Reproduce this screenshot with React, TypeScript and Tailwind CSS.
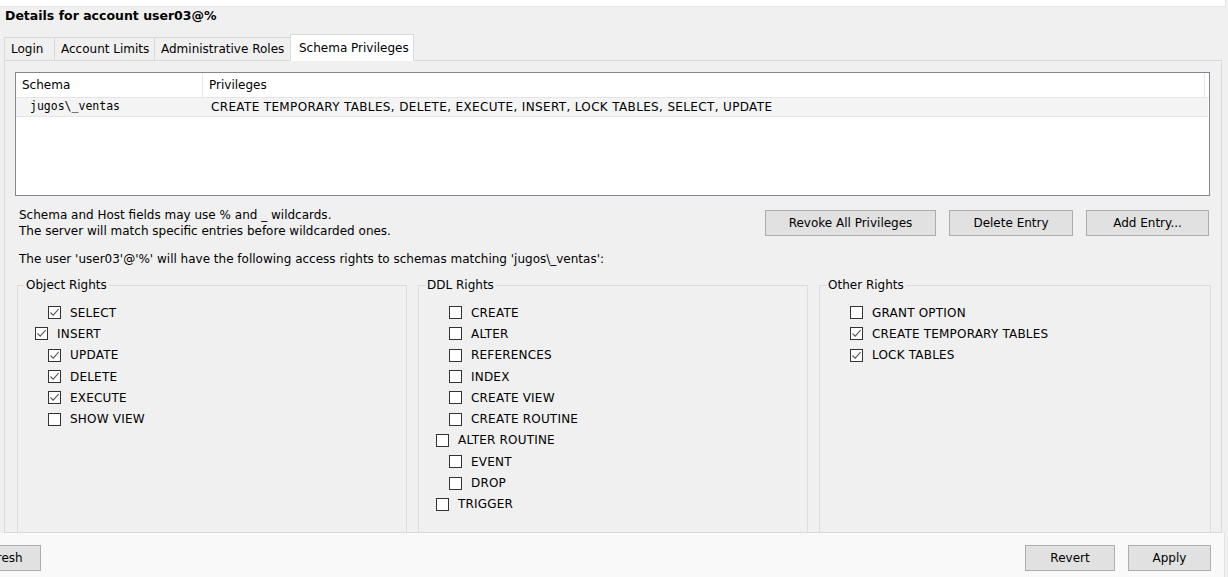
import React from "react";

const tabs = [
  { label: "Login", w: "w-[50px]" },
  { label: "Account Limits", w: "w-[100px]" },
  { label: "Administrative Roles", w: "w-[136px]" },
  { label: "Schema Privileges", w: "w-[124px]" },
];

const objectRights: [string, boolean, boolean][] = [
  ["SELECT", true, false],
  ["INSERT", true, true],
  ["UPDATE", true, false],
  ["DELETE", true, false],
  ["EXECUTE", true, false],
  ["SHOW VIEW", false, false],
];

const ddlRights: [string, boolean, boolean][] = [
  ["CREATE", false, false],
  ["ALTER", false, false],
  ["REFERENCES", false, false],
  ["INDEX", false, false],
  ["CREATE VIEW", false, false],
  ["CREATE ROUTINE", false, false],
  ["ALTER ROUTINE", false, true],
  ["EVENT", false, false],
  ["DROP", false, false],
  ["TRIGGER", false, true],
];

const otherRights: [string, boolean, boolean][] = [
  ["GRANT OPTION", false, false],
  ["CREATE TEMPORARY TABLES", true, false],
  ["LOCK TABLES", true, false],
];

function Check({ on }: { on: boolean }) {
  return (
    <span className="w-[13px] h-[13px] border border-[#333] bg-white flex items-center justify-center shrink-0">
      {on && (
        <svg viewBox="0 0 11 11" className="w-[11px] h-[11px]">
          <path d="M1.5 5.5 L4.2 8.2 L9.6 2.2" fill="none" stroke="#555" strokeWidth="1.1" />
        </svg>
      )}
    </span>
  );
}

function Group({ title, rows, width }: { title: string; rows: [string, boolean, boolean][]; width: string }) {
  return (
    <fieldset className={`border border-[#dcdcdc] h-[300px] shrink-0 ${width}`}>
      <legend className="ml-[6px] px-[2px] leading-[16px]">{title}</legend>
      <div className="pt-[9px]">
        {rows.map(([label, on, outdent]) => (
          <div key={label} className={`flex items-center h-[21.3px] gap-[9px] ${outdent ? "pl-[17px]" : "pl-[30px]"}`}>
            <Check on={on} />
            <span className="leading-[14px] tracking-[0.2px]">{label}</span>
          </div>
        ))}
      </div>
    </fieldset>
  );
}

function Button({ label, width }: { label: string; width: string }) {
  return (
    <div className={`h-[26px] ${width} bg-[#e1e1e1] border border-[#adadad] flex items-center justify-center shrink-0`}>
      {label}
    </div>
  );
}

export default function App() {
  return (
    <div className="w-[1228px] h-[577px] overflow-hidden bg-[#f0f0f0] text-[12px] text-black font-['DejaVu_Sans',sans-serif] flex flex-col">
      <div className="h-[7px] w-[1226px] bg-white border-r border-b border-[#e3e3e3] shrink-0" />

      {/* Title */}
      <div className="h-[22px] pl-[5px] pt-[1px] font-bold text-[12.5px] leading-[16px] shrink-0">Details for account user03@%</div>

      {/* Tabs */}
      <div className="flex items-end h-[31px] pl-[4px] shrink-0">
        {tabs.map((t, i) => {
          const active = i === tabs.length - 1;
          return (
            <div
              key={t.label}
              className={`flex items-center border border-[#d9d9d9] whitespace-nowrap ${t.w} ${
                active ? "h-[27px] bg-white border-b-white -mb-px relative z-10 pl-[8px]" : "h-[23px] bg-[#f0f0f0] border-b-0 border-r-0 pl-[6px]"
              }`}
            >
              {t.label}
            </div>
          );
        })}
      </div>

      {/* Tab pane */}
      <div className="ml-[4px] w-[1218px] h-[473px] border border-[#d9d9d9] bg-[#f0f0f0] pl-[10px] pt-[11px] overflow-hidden shrink-0">
        {/* Schema table */}
        <div className="w-[1195px] h-[124px] bg-white border border-[#828790]">
          <div className="flex h-[25px] items-center border-b border-[#e5e5e5]">
            <div className="w-[187px] pl-[6px] h-full flex items-center border-r border-[#e5e5e5]">Schema</div>
            <div className="flex-1 pl-[6px] h-full flex items-center border-r border-[#e5e5e5] mr-[4px]">Privileges</div>
          </div>
          <div className="flex h-[19px] items-center bg-[#f4f4f4] border-b border-[#e5e5e5] mr-[1px]">
            <div className="w-[187px] pl-[14px] font-['DejaVu_Sans_Mono',monospace] text-[11.5px]">jugos\_ventas</div>
            <div className="flex-1 pl-[8px] whitespace-nowrap tracking-[0.35px]">CREATE TEMPORARY TABLES, DELETE, EXECUTE, INSERT, LOCK TABLES, SELECT, UPDATE</div>
          </div>
        </div>

        {/* Info + actions */}
        <div className="flex justify-between items-start mt-[11px] w-[1194px]">
          <div className="pl-[4px] leading-[16px]">
            <div>Schema and Host fields may use % and _ wildcards.</div>
            <div>The server will match specific entries before wildcarded ones.</div>
          </div>
          <div className="flex gap-[13px] mt-[3px]">
            <Button label="Revoke All Privileges" width="w-[171px]" />
            <Button label="Delete Entry" width="w-[124px]" />
            <Button label="Add Entry..." width="w-[123px]" />
          </div>
        </div>

        <div className="pl-[4px] mt-[12px] leading-[16px]">
          The user 'user03'@'%' will have the following access rights to schemas matching 'jugos\_ventas':
        </div>

        {/* Rights */}
        <div className="flex gap-[11px] ml-[2px] mt-[10px]">
          <Group title="Object Rights" rows={objectRights} width="w-[390px]" />
          <Group title="DDL Rights" rows={ddlRights} width="w-[390px]" />
          <Group title="Other Rights" rows={otherRights} width="w-[392px]" />
        </div>
      </div>

      {/* Bottom bar */}
      <div className="flex-1 bg-[#f9f9f9] flex items-start pt-[12px] w-[1225px] border-r border-[#e3e3e3]">
        <div className="-ml-[41px]">
          <Button label="Refresh" width="w-[82px]" />
        </div>
        <div className="ml-auto flex gap-[13px] mr-[13px]">
          <Button label="Revert" width="w-[90px]" />
          <Button label="Apply" width="w-[83px]" />
        </div>
      </div>
    </div>
  );
}
